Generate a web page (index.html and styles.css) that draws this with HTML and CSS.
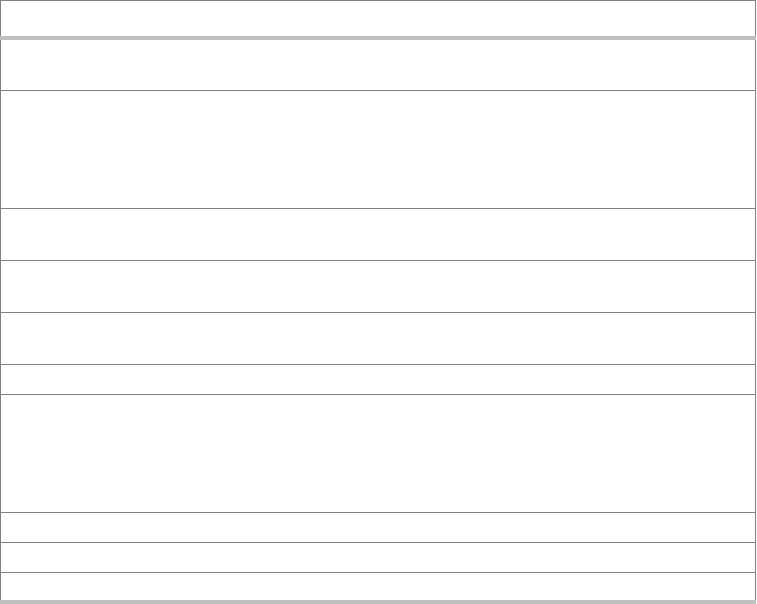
FILE: index.html
```html
<!DOCTYPE html>
<html>

<head>
    <meta charset="utf-8" />
    <meta name="viewport" content="width=device-width, initial-scale=1.0" />
    <title>Таблица</title>
    <link rel="stylesheet" href="styles.css">
</head>

<body>
    <div class="grid">
        <div class="grid-row grid-head"></div>
        <div class="grid-band"></div>
        <div class="grid-row row-50"></div>
        <div class="grid-row row-117"></div>
        <div class="grid-row row-51"></div>
        <div class="grid-row row-51"></div>
        <div class="grid-row row-51"></div>
        <div class="grid-row row-29"></div>
        <div class="grid-row row-117"></div>
        <div class="grid-row row-29"></div>
        <div class="grid-row row-29"></div>
        <div class="grid-row grid-last row-27"></div>
        <div class="grid-band"></div>
    </div>
</body>

</html>
```

FILE: styles.css
```css
/* Общие стили */
body {
    margin: 0;
    background-color: #ffffff;
    font-family: 'Liberation Sans', Arial, sans-serif;
}

.grid {
    width: 756px;
}

.grid-row {
    box-sizing: content-box;
    border-left: 1px solid #808080;
    border-right: 1px solid #808080;
    border-bottom: 1px solid #808080;
}

.grid-head {
    height: 35px;
    border-top: 1px solid #808080;
    border-bottom: none;
}

.grid-last {
    border-bottom: none;
}

.grid-band {
    height: 4px;
    background-color: #c0c0c0;
}

.row-27 { height: 27px; }
.row-29 { height: 29px; }
.row-50 { height: 50px; }
.row-51 { height: 51px; }
.row-117 { height: 117px; }
```
